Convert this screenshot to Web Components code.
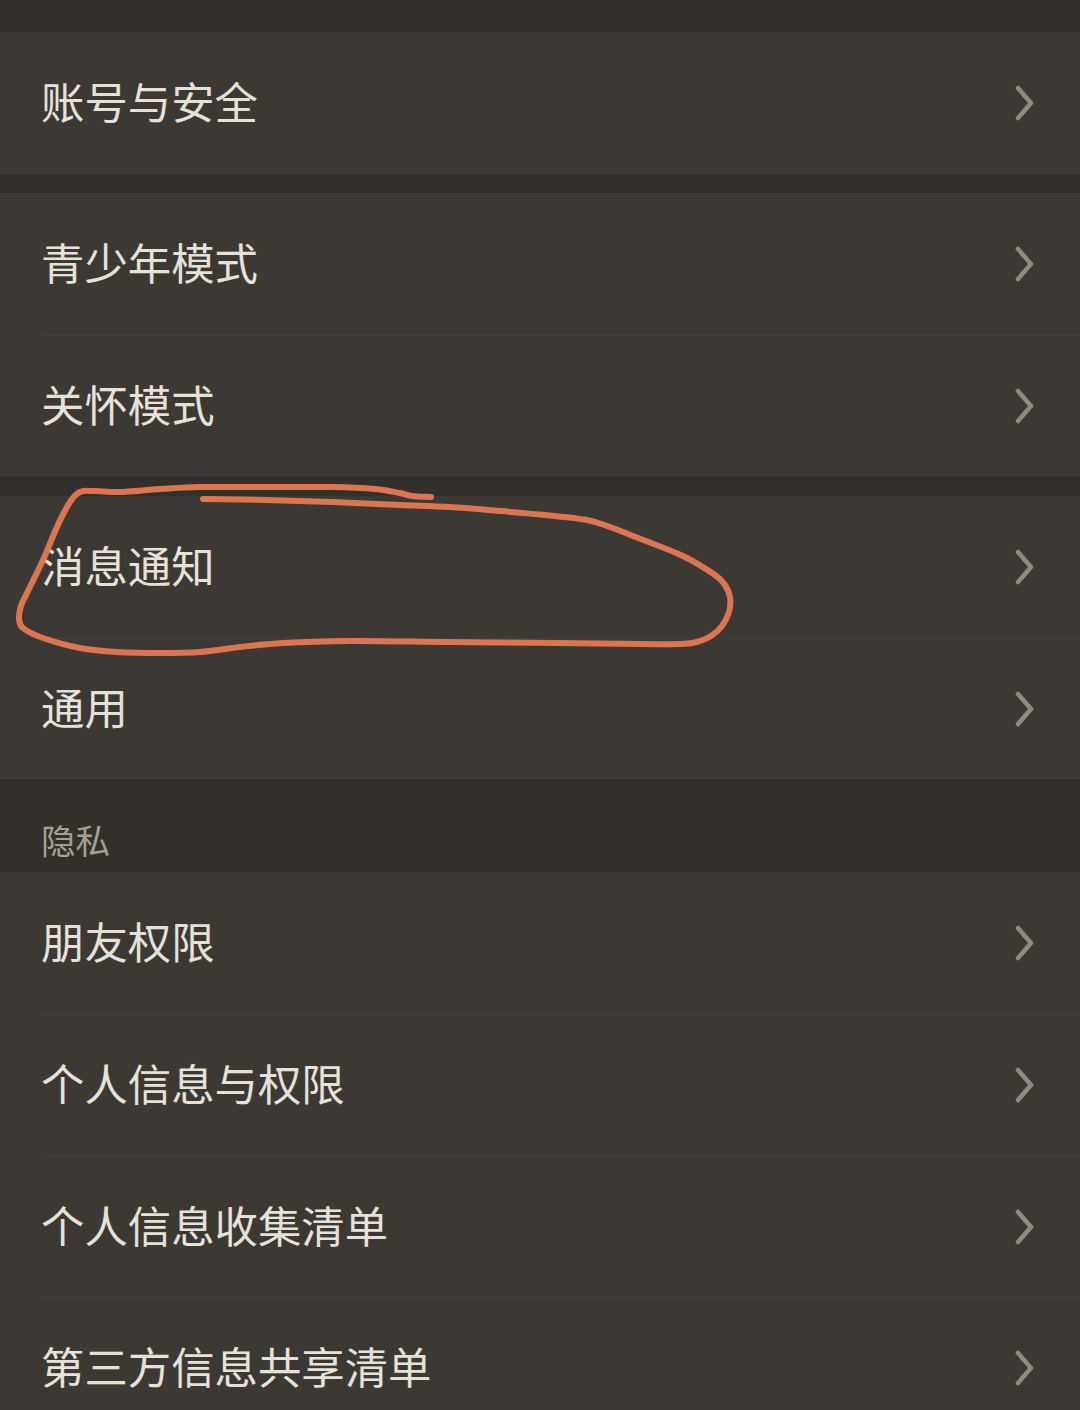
<!DOCTYPE html>
<html lang="zh">
<head>
<meta charset="utf-8">
<title>设置</title>
<style>
  html, body {
    margin: 0;
    height: 1410px;
    overflow: hidden;
    background: #33302b;
    font-family: "Noto Sans CJK SC", "Noto Sans", sans-serif;
  }
</style>
</head>
<body>
<settings-page>
  <settings-group>
    <settings-row>账号与安全</settings-row>
  </settings-group>
  <settings-group>
    <settings-row>青少年模式</settings-row>
    <settings-row>关怀模式</settings-row>
  </settings-group>
  <settings-group>
    <settings-row>消息通知</settings-row>
    <settings-row>通用</settings-row>
  </settings-group>
  <settings-group title="隐私">
    <settings-row>朋友权限</settings-row>
    <settings-row>个人信息与权限</settings-row>
    <settings-row>个人信息收集清单</settings-row>
    <settings-row>第三方信息共享清单</settings-row>
  </settings-group>
  <pen-mark></pen-mark>
</settings-page>

<script>
class SettingsPage extends HTMLElement {
  connectedCallback() {
    this.attachShadow({ mode: 'open' });
    this.shadowRoot.innerHTML = `
      <style>
        :host {
          display: block;
          position: relative;
          width: 1080px;
          height: 1410px;
          overflow: hidden;
          padding-top: 32px;
          box-sizing: border-box;
          background: #33302b;
        }
      </style>
      <slot></slot>
    `;
  }
}

class SettingsGroup extends HTMLElement {
  connectedCallback() {
    this.attachShadow({ mode: 'open' });
    const title = this.getAttribute('title');
    this.shadowRoot.innerHTML = `
      <style>
        :host {
          display: block;
          margin-bottom: 19.6px;
        }
        :host([title]) {
          margin-top: -19.6px;
        }
        .head {
          height: 93px;
          box-sizing: border-box;
          padding: 36px 0 0 41px;
          font-size: 34.5px;
          line-height: 48px;
          font-weight: 400;
          color: #a5a097;
        }
        .rows {
          background: #3c3935;
          box-shadow: inset 0 -1px 0 #403d38;
        }
      </style>
      ${title ? `<div class="head">${title}</div>` : ''}
      <div class="rows"><slot></slot></div>
    `;
  }
}

class SettingsRow extends HTMLElement {
  connectedCallback() {
    this.attachShadow({ mode: 'open' });
    this.shadowRoot.innerHTML = `
      <style>
        :host {
          display: block;
          padding-left: 41px;
        }
        :host(:not(:first-child)) .row {
          border-top: 1px solid #43403b;
        }
        .row {
          display: flex;
          align-items: center;
          justify-content: space-between;
          height: 140.6px;
          border-top: 1px solid transparent;
          padding-right: 44px;
          font-size: 43.4px;
          line-height: 60px;
          font-weight: 400;
          color: #e6e2d9;
        }
        span {
          margin-bottom: 6px;
        }
        svg {
          width: 22px;
          height: 38px;
          display: block;
        }
      </style>
      <div class="row">
        <span><slot></slot></span>
        <svg viewBox="0 0 22 38" fill="none" stroke="#8f8b82" stroke-width="4.5" stroke-linecap="round" stroke-linejoin="round">
          <path d="M4 4 L17 19 L4 34"/>
        </svg>
      </div>
    `;
  }
}

// the hand drawn loop round "消息通知", traced from the screenshot
const PEN_POINTS = [
  [431,497],[412,496],[400,493],[375,489],[333,487],[265,487],[200,487],[160,489],[120,492],[95,491],
  [80,492],[70,502],[57,527],[43,560],[27,593],[21,606],[19,618],[23,628],[43,638],[80,648],
  [117,652],[160,653],[200,652],[240,647],[283,643],[350,641],[450,642],[557,643],[640,644],[680,644],
  [697,642],[711,636],[722,626],[729,612],[730,597],[725,585],[715,575],[683,556],[633,536],[610,527],
  [587,520],[545,515],[500,511],[450,507],[400,505],[333,502],[265,500],[203,499]
];

class PenMark extends HTMLElement {
  connectedCallback() {
    this.attachShadow({ mode: 'open' });
    this.shadowRoot.innerHTML = `
      <style>
        :host {
          position: absolute;
          left: 0;
          top: 0;
          width: 1080px;
          height: 1410px;
          pointer-events: none;
        }
        svg { display: block; }
      </style>
      <svg width="1080" height="1410" viewBox="0 0 1080 1410" fill="none">
        <path d="${this.smooth(PEN_POINTS)}" stroke="#dc7650" stroke-width="6" stroke-linecap="round" stroke-linejoin="round"/>
      </svg>
    `;
  }

  smooth(p) {
    let d = `M${p[0][0]} ${p[0][1]}`;
    for (let i = 0; i < p.length - 1; i++) {
      const a = p[Math.max(i - 1, 0)];
      const b = p[i];
      const c = p[i + 1];
      const e = p[Math.min(i + 2, p.length - 1)];
      const x1 = b[0] + (c[0] - a[0]) / 6;
      const y1 = b[1] + (c[1] - a[1]) / 6;
      const x2 = c[0] - (e[0] - b[0]) / 6;
      const y2 = c[1] - (e[1] - b[1]) / 6;
      d += ` C${x1.toFixed(1)} ${y1.toFixed(1)} ${x2.toFixed(1)} ${y2.toFixed(1)} ${c[0]} ${c[1]}`;
    }
    return d;
  }
}

customElements.define('settings-page', SettingsPage);
customElements.define('settings-group', SettingsGroup);
customElements.define('settings-row', SettingsRow);
customElements.define('pen-mark', PenMark);
</script>
</body>
</html>
